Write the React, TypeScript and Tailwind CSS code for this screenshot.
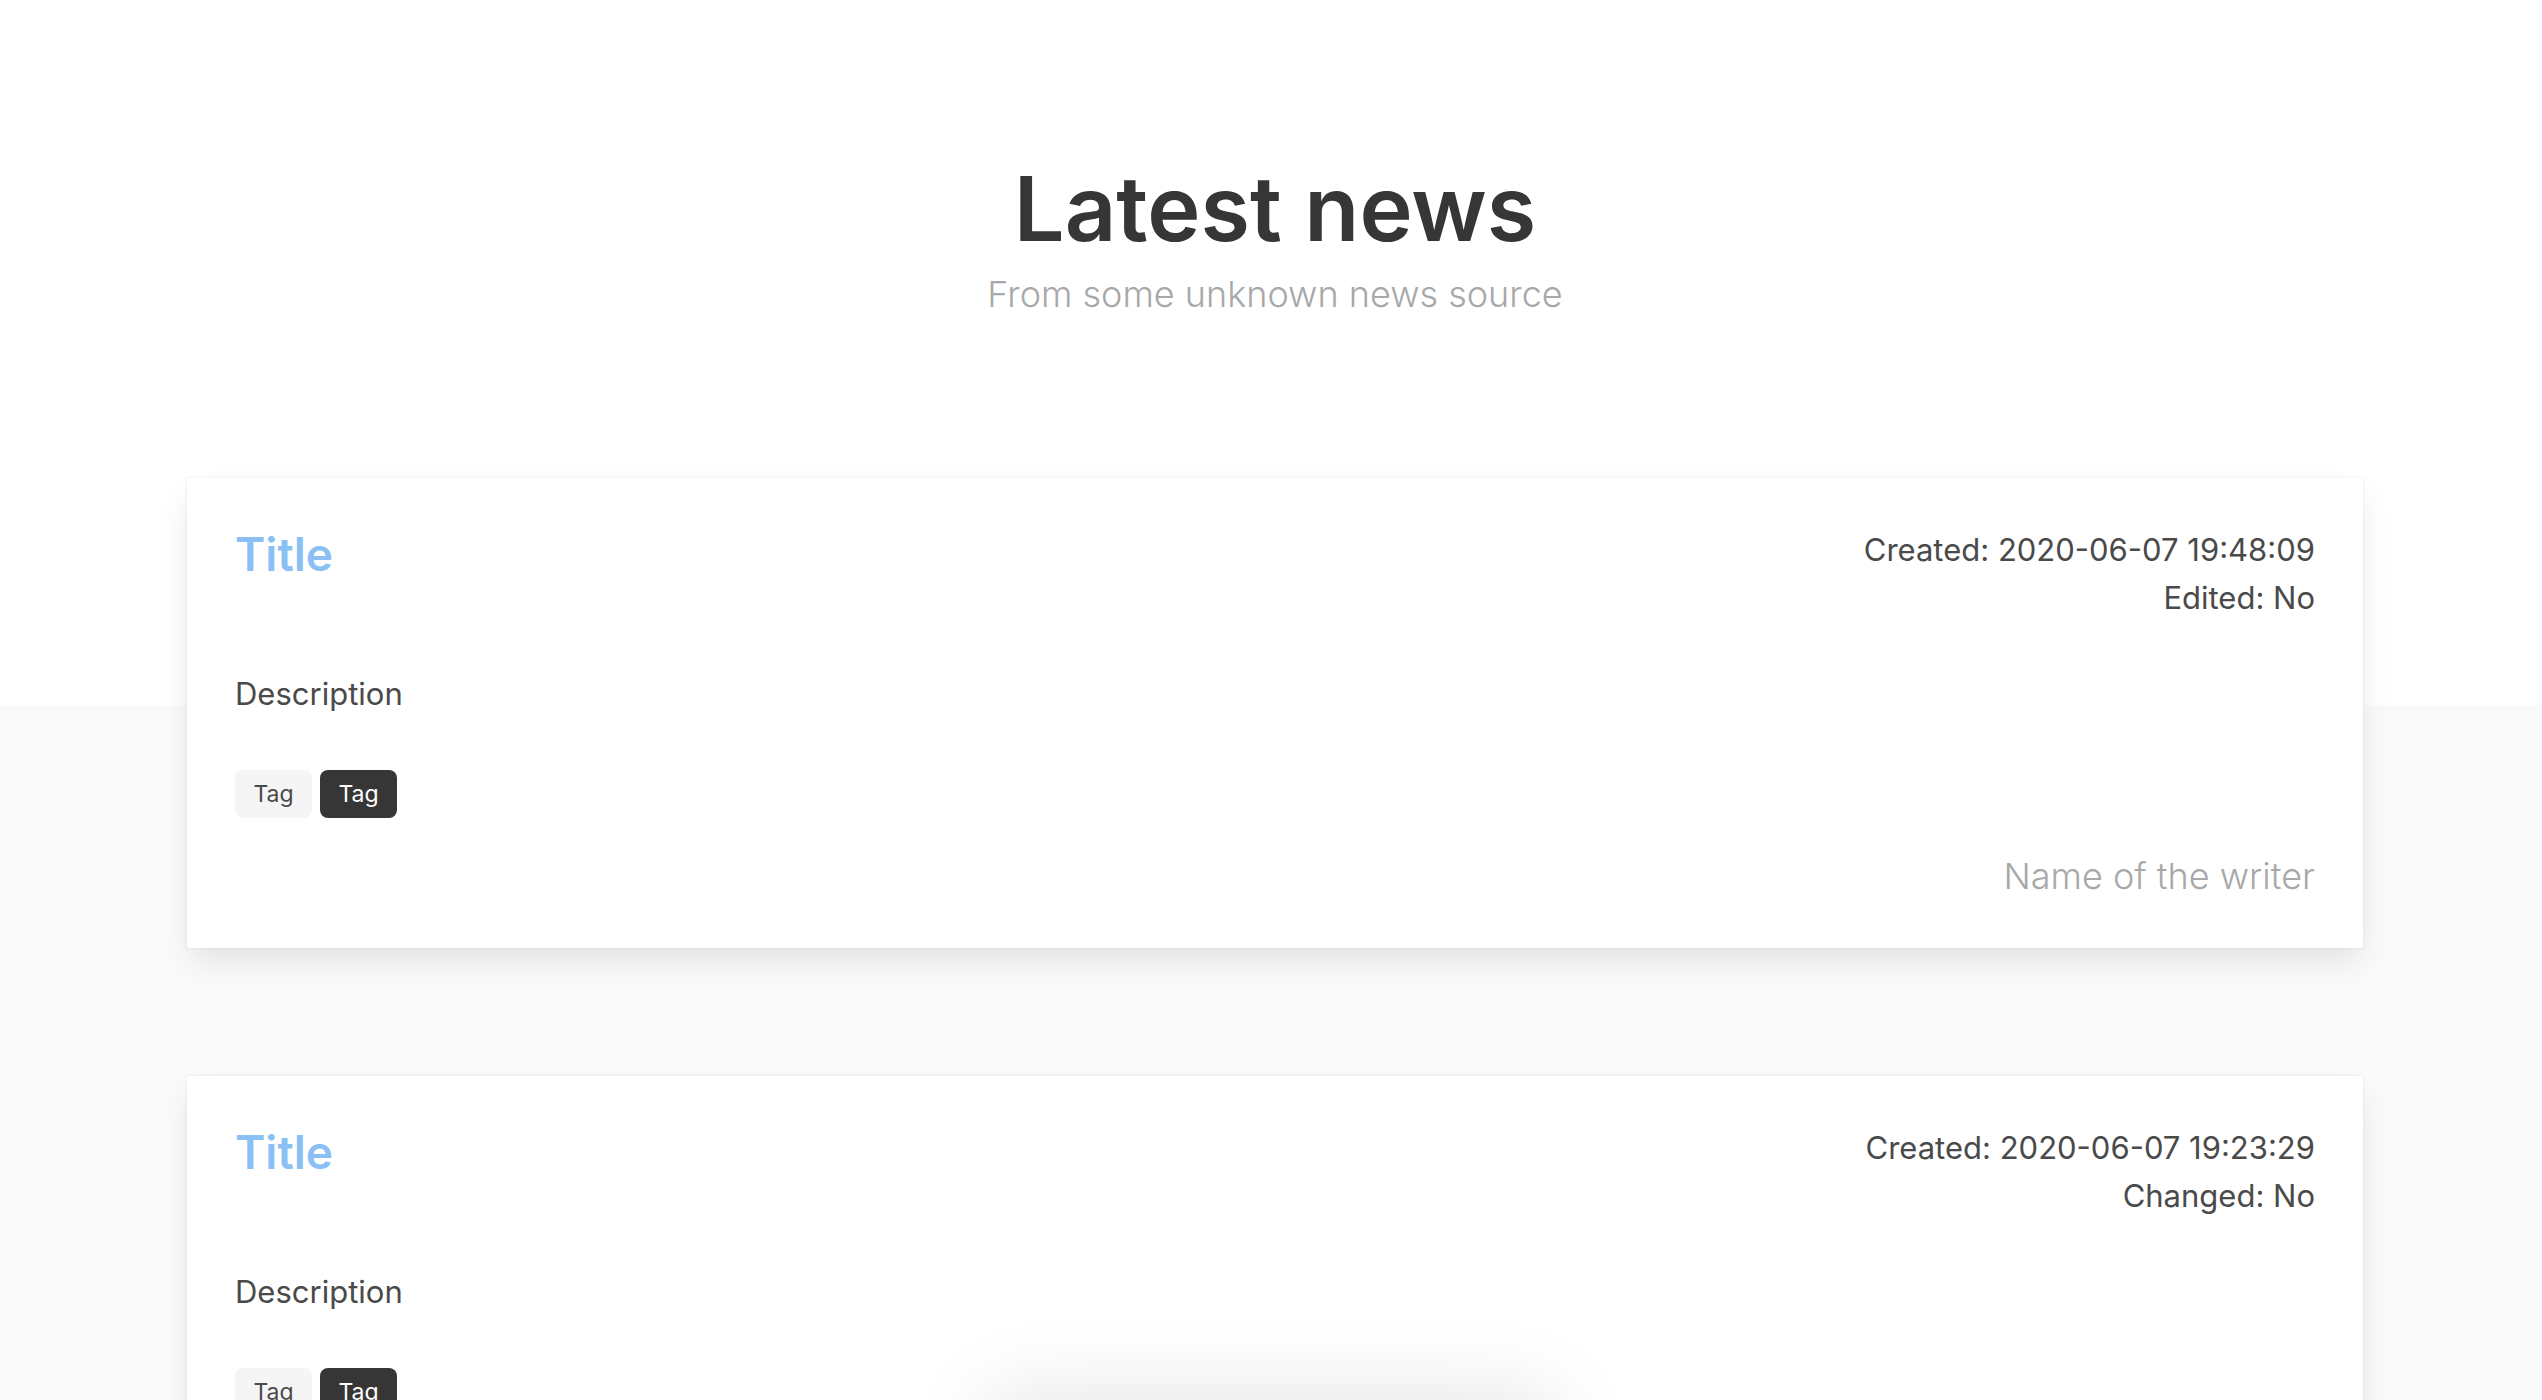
type Post = {
  id: number;
  created: string;
  changeLabel: string;
};

const posts: Post[] = [
  { id: 1, created: "2020-06-07 19:48:09", changeLabel: "Edited: No" },
  { id: 2, created: "2020-06-07 19:23:29", changeLabel: "Changed: No" },
];

function Card({ post }: { post: Post }) {
  return (
    <article className="rounded-[2px] bg-white p-12 text-[31px] leading-12 text-[#4a4a4a] shadow-[0_16px_32px_-4px_rgba(10,10,10,0.1),0_0_0_2px_rgba(10,10,10,0.02)]">
      <div className="flex items-start justify-between">
        <h2 className="text-[46px] leading-[56px] font-semibold text-[#8bc0f5]">Title</h2>
        <div className="text-right">
          <p>Created: {post.created}</p>
          <p>{post.changeLabel}</p>
        </div>
      </div>
      <p className="mt-12">Description</p>
      <div className="mt-[52px] flex gap-2 text-[23px]">
        <span className="flex h-12 min-w-[77px] items-center justify-center rounded-lg bg-[#f5f5f5] px-4">Tag</span>
        <span className="flex h-12 min-w-[77px] items-center justify-center rounded-lg bg-[#363636] px-4 text-white">Tag</span>
      </div>
      <p className="mt-[34px] text-right text-[36px] leading-12 font-light text-[#a8a8a8]">Name of the writer</p>
    </article>
  );
}

export default function App() {
  return (
    <div className="min-h-screen bg-[#fafafa] pb-24 font-['Inter','Liberation_Sans',sans-serif]">
      <header className="bg-white pt-[155px] pr-[179px] pb-[387px] pl-[187px] text-center">
        <h1 className="text-[90px] leading-[108px] font-semibold text-[#363636]">Latest news</h1>
        <p className="mt-[7px] text-[36px] leading-12 font-light text-[#a8a8a8]">From some unknown news source</p>
      </header>
      <main className="-mt-[227px] flex flex-col gap-32 pr-[179px] pl-[187px]">
        {posts.map((post) => (
          <Card key={post.id} post={post} />
        ))}
      </main>
      <div className="pointer-events-none fixed inset-x-0 top-full flex justify-center">
        <div className="h-24 w-[560px] shadow-[0_0_90px_rgba(10,10,10,0.12)]" />
      </div>
    </div>
  );
}
